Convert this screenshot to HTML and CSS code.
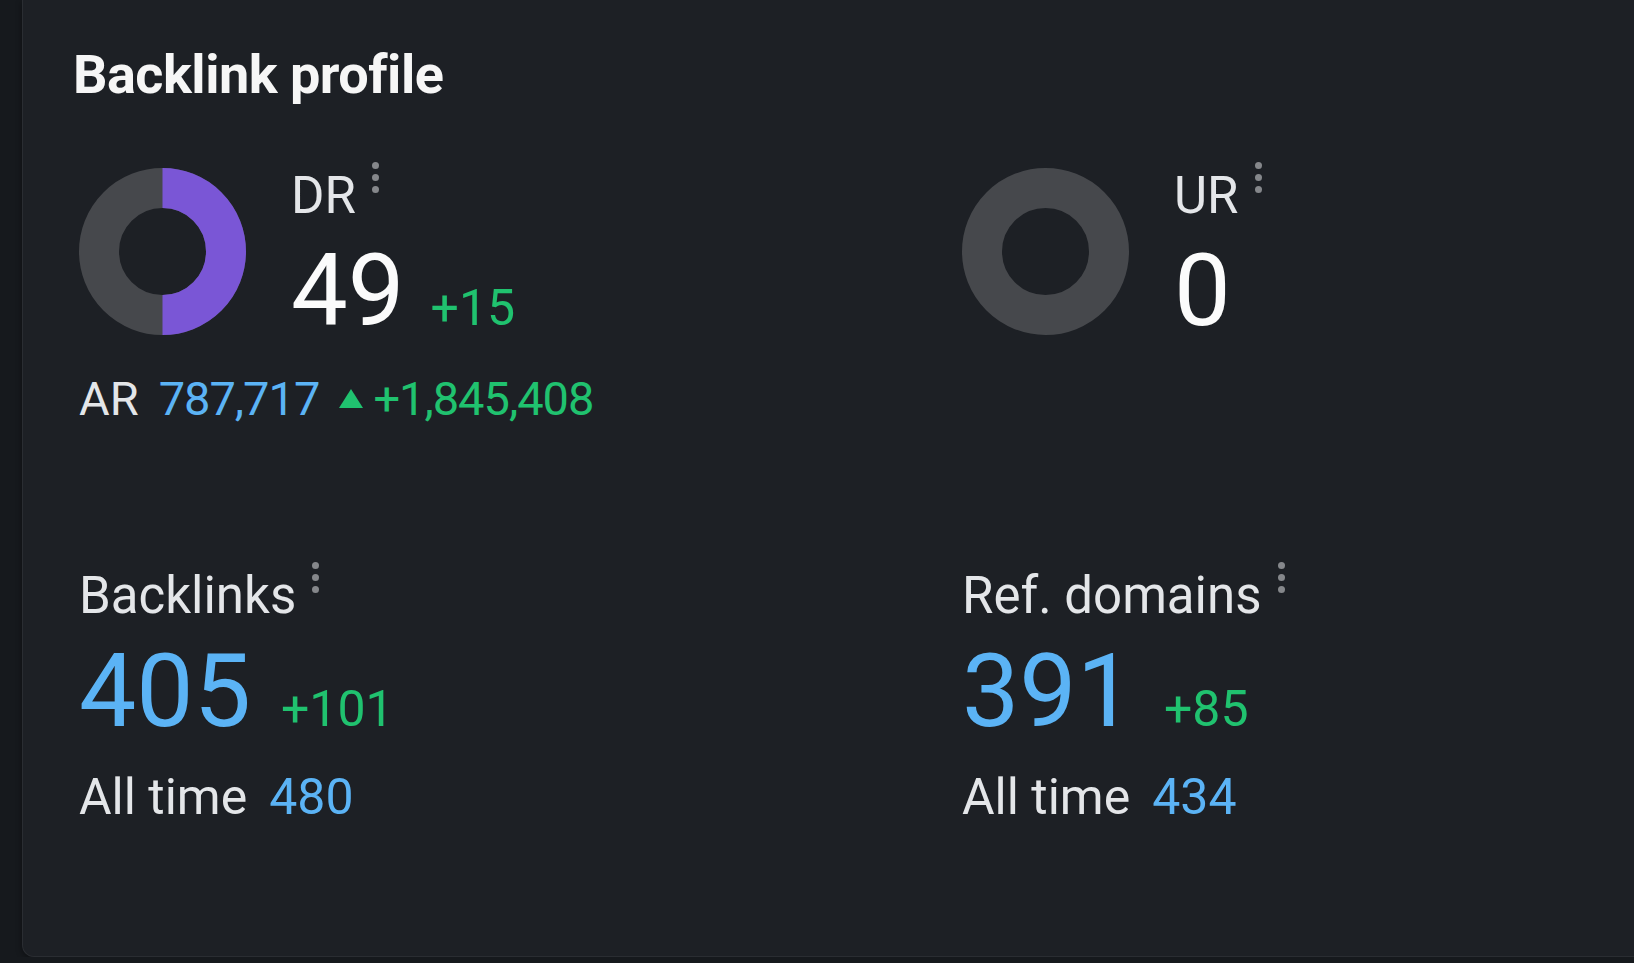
FILE: index.html
```html
<!DOCTYPE html>
<html lang="en">
<head>
    <meta charset="UTF-8">
    <meta name="viewport" content="width=device-width, initial-scale=1.0">
    <title>Backlink profile</title>
    <link rel="stylesheet" href="styles.css">
</head>
<body>

    <div class="card">
        <h1 class="card-title">Backlink profile</h1>

        <div class="metrics">
            <!-- DR -->
            <div class="metric">
                <div class="gauge-row">
                    <svg class="donut" width="167" height="167" viewBox="0 0 167 167">
                        <circle cx="83.5" cy="83.5" r="63.5" fill="none" stroke="#46484c" stroke-width="40"/>
                        <path d="M83.5 20 A63.5 63.5 0 0 1 83.5 147" fill="none" stroke="#7a56d6" stroke-width="40"/>
                    </svg>
                    <div class="gauge-text">
                        <div class="label">DR <span class="dots"><i></i><i></i><i></i></span></div>
                        <div class="value-row">
                            <span class="value">49</span>
                            <span class="delta">+15</span>
                        </div>
                    </div>
                </div>
                <div class="ar-row">
                    <span class="ar-label">AR</span>
                    <span class="ar-value">787,717</span>
                    <span class="ar-delta"><span class="arrow-up"></span>+1,845,408</span>
                </div>
            </div>

            <!-- UR -->
            <div class="metric">
                <div class="gauge-row">
                    <svg class="donut" width="167" height="167" viewBox="0 0 167 167">
                        <circle cx="83.5" cy="83.5" r="63.5" fill="none" stroke="#46484c" stroke-width="40"/>
                    </svg>
                    <div class="gauge-text">
                        <div class="label">UR <span class="dots"><i></i><i></i><i></i></span></div>
                        <div class="value-row">
                            <span class="value">0</span>
                        </div>
                    </div>
                </div>
            </div>

            <!-- Backlinks -->
            <div class="metric">
                <div class="label">Backlinks <span class="dots"><i></i><i></i><i></i></span></div>
                <div class="value-row big-row">
                    <span class="value blue">405</span>
                    <span class="delta">+101</span>
                </div>
                <div class="all-time">All time <span class="blue">480</span></div>
            </div>

            <!-- Ref. domains -->
            <div class="metric">
                <div class="label">Ref. domains <span class="dots"><i></i><i></i><i></i></span></div>
                <div class="value-row big-row">
                    <span class="value blue">391</span>
                    <span class="delta">+85</span>
                </div>
                <div class="all-time">All time <span class="blue">434</span></div>
            </div>
        </div>
    </div>

</body>
</html>
```

FILE: styles.css
```css
body {
    margin: 0;
    background: #16191d;
    font-family: Roboto, 'Liberation Sans', sans-serif;
    color: #e4e6e9;
    overflow: hidden;
}

.card {
    box-sizing: border-box;
    height: 957px;
    margin-left: 22px;
    margin-right: -24px;
    padding: 48px 0 0 56px;
    background: #1d2025;
    border: 1px solid #2a2d32;
    border-top: none;
    border-radius: 0 0 12px 12px;
    box-shadow: 0 2px 6px rgba(0, 0, 0, 0.4);
}

.card-title {
    margin: 0 0 0 -6px;
    font-size: 54px;
    line-height: 1;
    font-weight: 700;
    color: #f6f6f6;
    letter-spacing: -0.5px;
}

.metrics {
    display: grid;
    grid-template-columns: 883px 1fr;
    row-gap: 148px;
    margin-top: 66px;
}

.gauge-row {
    display: flex;
    align-items: flex-start;
    gap: 45px;
}

.donut {
    display: block;
}

.gauge-text {
    padding-top: 2px;
}

.label {
    display: flex;
    align-items: flex-start;
    font-size: 51px;
    line-height: 1;
    color: #e4e6e9;
}

/* menu de tres puntos */
.dots {
    display: flex;
    flex-direction: column;
    gap: 5px;
    margin-left: 16px;
    margin-top: -8px;
}

.dots i {
    display: block;
    width: 7px;
    height: 7px;
    border-radius: 50%;
    background: #85878b;
}

.value-row {
    display: flex;
    align-items: baseline;
    gap: 26px;
    margin-top: 19px;
}

.value {
    font-size: 101px;
    line-height: 1;
    color: #fbfbfb;
}

.delta {
    font-size: 50px;
    line-height: 1;
    color: #20c26f;
}

.blue {
    color: #5bb3f5;
}

.ar-row {
    display: flex;
    align-items: baseline;
    gap: 20px;
    margin-top: 34px;
    font-size: 47px;
    line-height: 1;
}

.ar-value {
    color: #5bb3f5;
    letter-spacing: -1px;
}

.ar-delta {
    color: #20c26f;
    letter-spacing: -1px;
}

.arrow-up {
    display: inline-block;
    width: 0;
    height: 0;
    border-left: 12px solid transparent;
    border-right: 12px solid transparent;
    border-bottom: 19px solid #20c26f;
    margin-right: 10px;
    vertical-align: 7px;
}

.big-row {
    gap: 30px;
    margin-top: 19px;
}

.big-row .value {
    font-size: 102px;
}

.all-time {
    display: flex;
    gap: 22px;
    margin-top: 30px;
    font-size: 50px;
    line-height: 1;
}
```
